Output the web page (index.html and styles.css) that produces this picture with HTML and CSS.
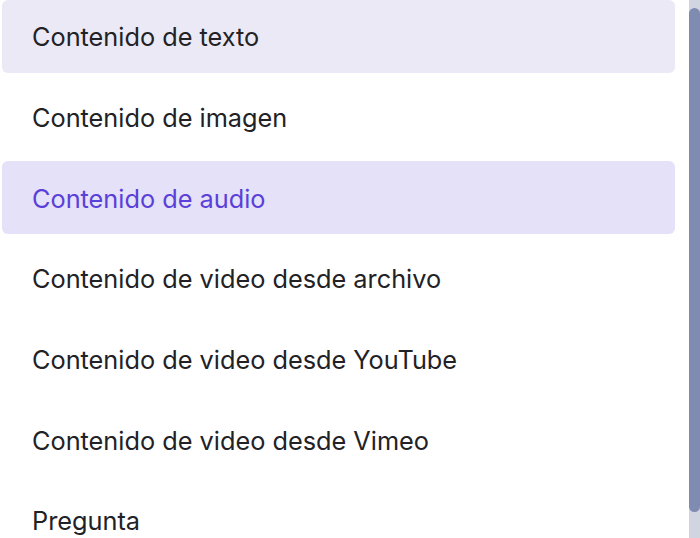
FILE: index.html
```html
<!DOCTYPE html>
<html lang="es">
<head>
<meta charset="utf-8">
<link rel="stylesheet" href="styles.css">
</head>
<body>
<div class="page">
  <ul class="menu">
    <li class="item hover">Contenido de texto</li>
    <li class="item">Contenido de imagen</li>
    <li class="item active">Contenido de audio</li>
    <li class="item">Contenido de video desde archivo</li>
    <li class="item">Contenido de video desde YouTube</li>
    <li class="item">Contenido de video desde Vimeo</li>
    <li class="item">Pregunta</li>
  </ul>
  <div class="scrollbar"><div class="thumb"></div></div>
</div>
</body>
</html>
```

FILE: styles.css
```css
html, body {
  margin: 0;
  padding: 0;
  background: #ffffff;
}
.page {
  display: flex;
  width: 700px;
  height: 538px;
  overflow: hidden;
}
.menu {
  list-style: none;
  margin: 0;
  padding: 0 14px 0 2px;
  flex: 1;
  display: flex;
  flex-direction: column;
  gap: 8px;
}
.item {
  flex: none;
  height: 72.67px;
  display: flex;
  align-items: center;
  padding: 2px 0 0 30px;
  border-radius: 6px;
  font-family: Inter, "Noto Sans", sans-serif;
  font-size: 25.3px;
  line-height: 1.1;
  color: #222226;
  box-sizing: border-box;
}
.item.hover {
  background: #ebe9f5;
}
.item.active {
  background: #e4e1f8;
  color: #5a3fd8;
}
.scrollbar {
  width: 11px;
  flex: none;
  background: #d1d4e1;
  padding: 8px 0 26px;
  box-sizing: border-box;
  display: flex;
}
.thumb {
  flex: 1;
  background: #7f8bb0;
  border-radius: 6px;
}
```
